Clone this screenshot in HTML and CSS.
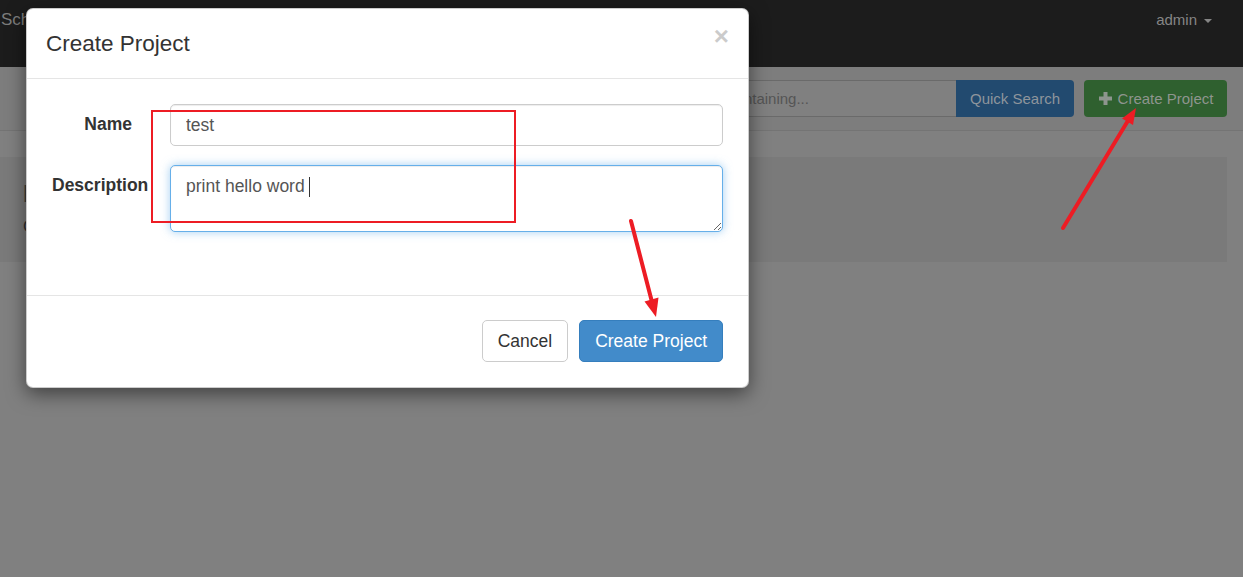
FILE: index.html
```html
<!DOCTYPE html>
<html>
<head>
<meta charset="utf-8">
<title>Create Project</title>
<link rel="stylesheet" href="styles.css">
</head>
<body>
  <nav class="navbar">
    <div class="brand">Schedulis</div>
    <div class="user">admin <span class="caret"></span></div>
  </nav>

  <div class="subbar">
    <div class="search">
      <input class="search-input" type="text" placeholder="Search for projects containing...">
      <button class="btn-qs">Quick Search</button>
    </div>
    <button class="btn-green">
      <svg class="plus" width="13" height="13" viewBox="0 0 13 13"><rect x="4.5" y="0" width="4" height="13"/><rect x="0" y="4.5" width="13" height="4"/></svg>
      Create Project
    </button>
  </div>

  <main class="content">
    <div class="panel">
      <h2 class="panel-title">Projects</h2>
      <p class="panel-text">Create a new project to get started.</p>
    </div>
  </main>

  <div class="modal">
    <div class="modal-header">
      <h4 class="modal-title">Create Project</h4>
      <span class="close">&times;</span>
    </div>
    <div class="modal-body">
      <div class="form-row">
        <label class="form-label">Name</label>
        <input class="form-control" type="text" value="test">
      </div>
      <div class="form-row">
        <label class="form-label">Description</label>
        <div class="ta-wrap">
          <textarea class="form-control ta focus" rows="2">print hello word </textarea>
          <span class="text-caret"></span>
        </div>
      </div>
    </div>
    <div class="modal-footer">
      <button class="btn btn-default">Cancel</button>
      <button class="btn btn-primary">Create Project</button>
    </div>
  </div>

  <svg class="annot" width="1243" height="577" viewBox="0 0 1243 577">
    <rect x="152" y="111" width="363" height="111" fill="none" stroke="#ed1c24" stroke-width="2"/>
    <line x1="631" y1="221" x2="652" y2="302" stroke="#ed1c24" stroke-width="4" stroke-linecap="round"/>
    <polygon points="656,317 658.5,297.5 644.5,301.5" fill="#ed1c24"/>
    <line x1="1063" y1="228" x2="1129" y2="119" stroke="#ed1c24" stroke-width="4" stroke-linecap="round"/>
    <polygon points="1136,108 1133,125 1122,118.5" fill="#ed1c24"/>
  </svg>
</body>
</html>
```

FILE: styles.css
```css
html, body {
  margin: 0;
  padding: 0;
}
body {
  width: 1243px;
  height: 577px;
  overflow: hidden;
  background: #808080;
  font-family: "Liberation Sans", Arial, sans-serif;
  position: relative;
}

/* background page (dimmed) */
.navbar {
  height: 67px;
  background: #1c1c1c;
  display: flex;
  justify-content: space-between;
  align-items: flex-start;
}
.brand {
  padding: 10px 0 0 1px;
  font-size: 17px;
  color: #7c7c7c;
  line-height: 20px;
}
.user {
  padding: 10px 31px 0 0;
  font-size: 15px;
  line-height: 20px;
  color: #858585;
  display: flex;
  align-items: center;
  gap: 7px;
}
.caret {
  width: 0;
  height: 0;
  border-left: 4.5px solid transparent;
  border-right: 4.5px solid transparent;
  border-top: 4.5px solid #858585;
  margin-top: 1px;
}

.subbar {
  background: #7d7d7d;
  border-bottom: 1px solid #747474;
  display: flex;
  justify-content: flex-end;
  align-items: flex-start;
  padding: 13px 16px 0 0;
  box-sizing: border-box;
  height: 64px;
  gap: 10px;
}
.search {
  display: flex;
}
.search-input {
  width: 371px;
  height: 37px;
  box-sizing: border-box;
  background: #808080;
  border: 1px solid #6a6a6a;
  border-right: none;
  border-radius: 4px 0 0 4px;
  padding: 0 12px;
  font-family: "Liberation Sans", Arial, sans-serif;
  font-size: 15px;
  color: #4d4d4d;
}
.search-input::placeholder {
  color: #555;
}
.btn-qs {
  width: 118px;
  height: 37px;
  border: none;
  border-radius: 0 4px 4px 0;
  background: #224a6f;
  color: #8e959c;
  font-family: "Liberation Sans", Arial, sans-serif;
  font-size: 15px;
  padding: 0;
}
.btn-green {
  width: 143px;
  height: 37px;
  border: none;
  border-radius: 4px;
  background: #2f602f;
  color: #8e958e;
  font-family: "Liberation Sans", Arial, sans-serif;
  font-size: 15px;
  padding: 0 0 0 1px;
  display: flex;
  align-items: center;
  justify-content: center;
  gap: 6px;
}
.plus {
  fill: #8e958e;
}

.content {
  padding: 26px 16px 0 0;
}
.panel {
  height: 105px;
  background: #7a7a7a;
  padding: 24px 0 0 23px;
  box-sizing: border-box;
}
.panel-title {
  margin: 0;
  font-size: 24px;
  line-height: 26px;
  color: #3a3a3a;
}
.panel-text {
  margin: 10px 0 0;
  font-size: 17px;
  color: #2f2f2f;
}

/* modal */
.modal {
  position: absolute;
  left: 26px;
  top: 8px;
  width: 723px;
  box-sizing: border-box;
  background: #fff;
  border: 1px solid rgba(0, 0, 0, 0.2);
  border-radius: 7px;
  box-shadow: 0 6px 19px rgba(0, 0, 0, 0.5);
  color: #333;
}
.modal-header {
  display: flex;
  justify-content: space-between;
  align-items: flex-start;
  padding: 19px 19px 18px;
  border-bottom: 1px solid #e5e5e5;
}
.modal-title {
  margin: 0;
  font-size: 22.5px;
  font-weight: normal;
  line-height: 32px;
  color: #333;
}
.close {
  font-size: 26px;
  font-weight: bold;
  line-height: 26px;
  color: #000;
  opacity: 0.2;
  margin-top: -5px;
}
.modal-body {
  padding: 25px 25px 25px;
}
.form-row {
  display: grid;
  grid-template-columns: 80px 1fr;
  column-gap: 38px;
  margin-bottom: 19px;
}
.form-label {
  justify-self: safe end;
  width: max-content;
  font-weight: bold;
  font-size: 17.5px;
  line-height: 25px;
  padding-top: 8px;
  white-space: nowrap;
  color: #333;
}
.form-control {
  display: block;
  width: 100%;
  height: 42px;
  box-sizing: border-box;
  padding: 7.5px 15px;
  border: 1px solid #ccc;
  border-radius: 5px;
  box-shadow: inset 0 1px 1px rgba(0, 0, 0, 0.075);
  font-family: "Liberation Sans", Arial, sans-serif;
  font-size: 17.5px;
  line-height: 25px;
  color: #555;
  background: #fff;
  margin: 0;
}
.ta-wrap {
  position: relative;
}
.ta {
  height: 67px;
  resize: vertical;
}
.ta.focus {
  border-color: #66afe9;
  box-shadow: inset 0 1px 1px rgba(0, 0, 0, 0.075), 0 0 10px rgba(102, 175, 233, 0.6);
  outline: none;
}
.text-caret {
  position: absolute;
  left: 139px;
  top: 12px;
  width: 1px;
  height: 20px;
  background: #333;
}
.modal-footer {
  display: flex;
  justify-content: flex-end;
  gap: 11px;
  margin-top: 19px;
  padding: 24px 25px 25px;
  border-top: 1px solid #e5e5e5;
}
.btn {
  height: 42px;
  box-sizing: border-box;
  padding: 7.5px 15px;
  font-family: "Liberation Sans", Arial, sans-serif;
  font-size: 17.5px;
  line-height: 25px;
  border-radius: 5px;
  border: 1px solid transparent;
}
.btn-default {
  background: #fff;
  border-color: #ccc;
  color: #333;
}
.btn-primary {
  background: #428bca;
  border-color: #357ebd;
  color: #fff;
}

.annot {
  position: absolute;
  left: 0;
  top: 0;
  pointer-events: none;
}
```
